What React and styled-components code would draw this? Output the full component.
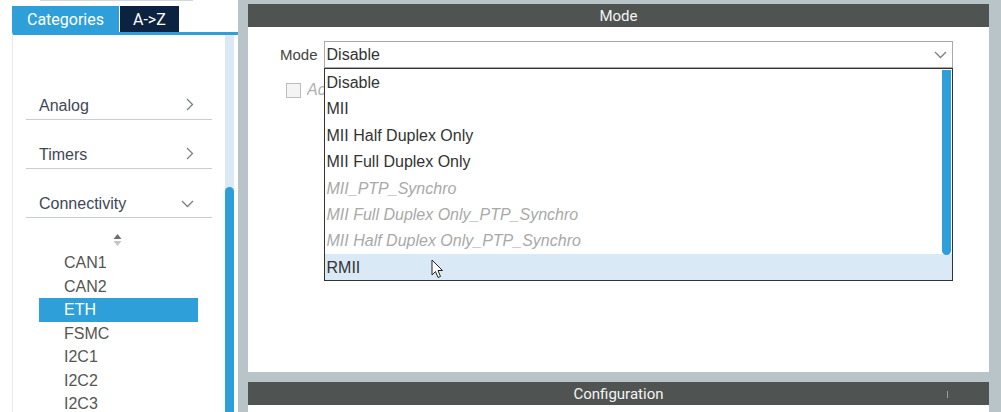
import styled, { createGlobalStyle } from 'styled-components';

const Global = createGlobalStyle`
    html, body {
        margin: 0;
        padding: 0;
        height: 100%;
        overflow: hidden;
        background: #ffffff;
    }
    #root {
        height: 100%;
    }
    body {
        font-family: 'Liberation Sans', Arial, sans-serif;
    }
`;

const Frame = styled.div`
    display: flex;
    height: 412px;
    width: 1001px;
`;

const Sidebar = styled.aside`
    width: 238px;
    flex-shrink: 0;
    background: #ffffff;
    padding-left: 12px;
    box-sizing: border-box;
    display: flex;
    flex-direction: column;
`;

const SearchEdge = styled.div`
    margin: 0 45px 0 28px;
    border-top: 1px solid #d3d7da;
`;

const TabRow = styled.div`
    display: flex;
    margin-top: 5px;
    height: 26px;
    gap: 1px;
`;

const Tab = styled.div`
    height: 26px;
    padding: 0 ${p => p.$dark ? '13px' : '15px'};
    background: ${p => p.$dark ? '#0b2240' : '#2f9fd9'};
    color: #ffffff;
    font-family: Roboto, 'Liberation Sans', sans-serif;
    font-size: 16px;
    line-height: 27px;
`;

const TreePanel = styled.div`
    flex: 1;
    display: flex;
    border-top: 3px solid #2f9fd9;
    border-left: 1px solid #e8eaec;
    min-height: 0;
    overflow: hidden;
`;

const TreeContent = styled.div`
    flex: 1;
    padding-top: 36px;
`;

const CategoryRow = styled.div`
    height: 49px;
    box-sizing: border-box;
    margin: 0 13px;
    padding: 0 18px 3px 13px;
    border-bottom: 1px solid #c9cdd1;
    display: flex;
    align-items: flex-end;
    justify-content: space-between;
    font-size: 16px;
    line-height: 20px;
    color: #3e4759;
    svg {
        margin-bottom: ${p => p.$open ? '6px' : '5px'};
    }
`;

const SortMark = styled.div`
    height: 33px;
    box-sizing: border-box;
    padding-top: 15px;
    display: flex;
    justify-content: center;
    padding-right: 4px;
`;

const PeripheralItem = styled.div`
    margin-left: 26px;
    width: 159px;
    height: 23.5px;
    line-height: 24px;
    padding-left: 25px;
    box-sizing: border-box;
    font-size: 16px;
    color: ${p => p.$selected ? '#ffffff' : '#555555'};
    background: ${p => p.$selected ? '#2f9fd9' : 'transparent'};
`;

const ScrollTrack = styled.div`
    width: 9px;
    margin-right: 4px;
    background: #dbe9f6;
    display: flex;
    flex-direction: column;
`;

const ScrollThumb = styled.div`
    margin-top: 152px;
    flex: 1;
    background: #2c9fd8;
    border-radius: 5px 5px 0 0;
`;

const Workspace = styled.main`
    flex: 1;
    background: #b9c4c8;
    padding: 4px 12px 0 10px;
    display: flex;
    flex-direction: column;
    gap: 10px;
`;

const Panel = styled.section`
    background: #ffffff;
    display: flex;
    flex-direction: column;
    height: ${p => p.$height ? p.$height + 'px' : 'auto'};
    flex: ${p => p.$height ? '0 0 auto' : '1'};
`;

const PanelHeader = styled.div`
    position: relative;
    height: 23px;
    background: #4f5351;
    color: #f4f4f4;
    text-align: center;
    font-family: Roboto, 'Liberation Sans', sans-serif;
    font-size: 15px;
    line-height: 24px;
`;

const Grip = styled.span`
    position: absolute;
    right: 41px;
    top: 9px;
    width: 1px;
    height: 7px;
    background: #9aa0a0;
`;

const ModeBody = styled.div`
    flex: 1;
    padding: 14px 36px 0 32px;
`;

const FieldRow = styled.div`
    display: flex;
    align-items: center;
    gap: 6px;
`;

const FieldLabel = styled.label`
    font-size: 15px;
    color: #444444;
`;

const SelectWrap = styled.div`
    flex: 1;
    position: relative;
`;

const SelectBox = styled.div`
    height: 27px;
    box-sizing: border-box;
    border: 1px solid #a9a9a9;
    padding: 0 5px 0 2px;
    display: flex;
    align-items: center;
    justify-content: space-between;
    font-size: 16px;
    color: #333333;
`;

const DropList = styled.ul`
    position: absolute;
    top: 100%;
    left: 0;
    right: 0;
    margin: 0;
    padding: 0;
    list-style: none;
    background: #ffffff;
    border: 1px solid #333333;
    z-index: 2;
`;

const Option = styled.li`
    position: relative;
    height: 26.4px;
    box-sizing: border-box;
    padding: 1px 0 0 2px;
    line-height: 26px;
    font-size: 16px;
    font-style: ${p => p.$disabled ? 'italic' : 'normal'};
    color: ${p => p.$disabled ? '#a9a9a9' : '#333333'};
    background: ${p => p.$hover ? '#dae9f6' : 'transparent'};
`;

const ListThumb = styled.div`
    position: absolute;
    top: 1px;
    right: 1px;
    width: 9px;
    height: 185px;
    background: #2f9fd9;
    border-radius: 0 0 5px 5px;
`;

const Pointer = styled.svg`
    position: absolute;
    left: 106px;
    top: 5px;
`;

const CheckRow = styled.div`
    display: flex;
    align-items: center;
    margin-top: 13px;
    padding-left: 6px;
`;

const CheckBox = styled.span`
    width: 13px;
    height: 13px;
    border: 1px solid #bdbdbd;
    background: #f4f4f4;
`;

const CheckLabel = styled.span`
    margin-left: 6px;
    max-width: 18px;
    overflow: hidden;
    white-space: nowrap;
    font-size: 16px;
    font-style: italic;
    color: #b0b0b0;
`;

function Chevron({ down }) {
    return down ? (
        <svg width="13" height="8" viewBox="0 0 13 8">
            <polyline points="1,1 6.5,6.5 12,1" fill="none" stroke="#7a7f85" strokeWidth="1.3" />
        </svg>
    ) : (
        <svg width="8" height="13" viewBox="0 0 8 13">
            <polyline points="1,1 6.5,6.5 1,12" fill="none" stroke="#7a7f85" strokeWidth="1.3" />
        </svg>
    );
}

const categories = [
    { name: 'Analog' },
    { name: 'Timers' },
    { name: 'Connectivity', open: true },
];

const peripherals = ['CAN1', 'CAN2', 'ETH', 'FSMC', 'I2C1', 'I2C2', 'I2C3'];

const modes = [
    { label: 'Disable' },
    { label: 'MII' },
    { label: 'MII Half Duplex Only' },
    { label: 'MII Full Duplex Only' },
    { label: 'MII_PTP_Synchro', disabled: true },
    { label: 'MII Full Duplex Only_PTP_Synchro', disabled: true },
    { label: 'MII Half Duplex Only_PTP_Synchro', disabled: true },
    { label: 'RMII', hover: true },
];

function App() {
    return (
        <Frame>
            <Global />
            <Sidebar>
                <SearchEdge />
                <TabRow>
                    <Tab>Categories</Tab>
                    <Tab $dark>A-&gt;Z</Tab>
                </TabRow>
                <TreePanel>
                    <TreeContent>
                        {categories.map(c => (
                            <CategoryRow key={c.name} $open={c.open}>
                                <span>{c.name}</span>
                                <Chevron down={c.open} />
                            </CategoryRow>
                        ))}
                        <SortMark>
                            <svg width="9" height="14" viewBox="0 0 9 14">
                                <polygon points="4.5,1 8.5,6 0.5,6" fill="#6f6f6f" />
                                <polygon points="0.5,8 8.5,8 4.5,13" fill="#c4c4c4" />
                            </svg>
                        </SortMark>
                        {peripherals.map(p => (
                            <PeripheralItem key={p} $selected={p === 'ETH'}>{p}</PeripheralItem>
                        ))}
                    </TreeContent>
                    <ScrollTrack>
                        <ScrollThumb />
                    </ScrollTrack>
                </TreePanel>
            </Sidebar>
            <Workspace>
                <Panel $height={368}>
                    <PanelHeader>Mode</PanelHeader>
                    <ModeBody>
                        <FieldRow>
                            <FieldLabel>Mode</FieldLabel>
                            <SelectWrap>
                                <SelectBox>
                                    <span>Disable</span>
                                    <Chevron down />
                                </SelectBox>
                                <DropList>
                                    {modes.map(m => (
                                        <Option key={m.label} $disabled={m.disabled} $hover={m.hover}>
                                            {m.label}
                                            {m.hover && (
                                                <Pointer width="13" height="20" viewBox="0 0 13 20">
                                                    <path d="M1 1 L1 16 L4.5 12.5 L7 18.5 L9.5 17.5 L7 11.5 L11.5 11.5 Z" fill="#ffffff" stroke="#222222" strokeWidth="1" strokeLinejoin="round" />
                                                </Pointer>
                                            )}
                                        </Option>
                                    ))}
                                    <ListThumb />
                                </DropList>
                            </SelectWrap>
                        </FieldRow>
                        <CheckRow>
                            <CheckBox />
                            <CheckLabel>Activate Rx Err signal</CheckLabel>
                        </CheckRow>
                    </ModeBody>
                </Panel>
                <Panel>
                    <PanelHeader>
                        Configuration
                        <Grip />
                    </PanelHeader>
                </Panel>
            </Workspace>
        </Frame>
    );
}

export default App;
